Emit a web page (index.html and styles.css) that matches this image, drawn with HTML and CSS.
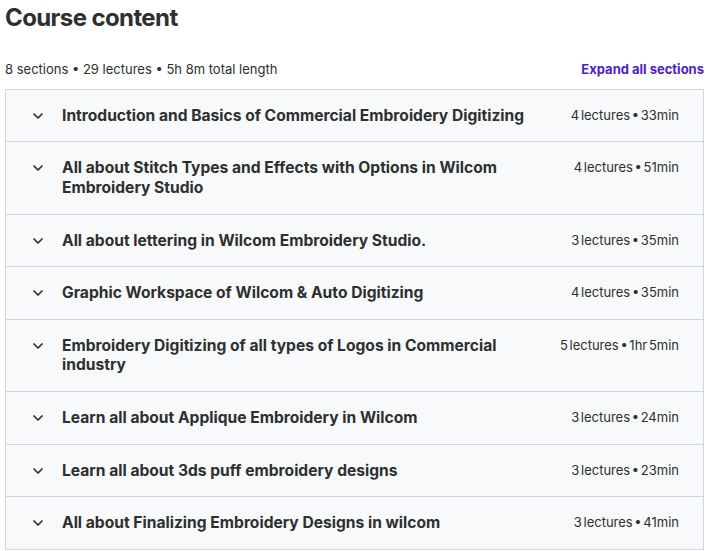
FILE: index.html
```html
<!DOCTYPE html>
<html>
	<head>
		<meta charset="UTF-8">
		<title>Course content</title>
		<link rel="stylesheet" href="styles.css">
	</head>
	<body>
		<div id="wrap">
			<h2 class="title">Course content</h2>
			<div class="meta">
				<span class="meta-text">8 sections • 29 lectures • 5h 8m total length</span>
				<button class="expand">Expand all sections</button>
			</div>
			<div class="sections">
				<div class="section">
					<svg class="chevron" viewBox="0 0 24 24"><path d="M6 9l6 6 6-6"/></svg>
					<span class="section-title">Introduction and Basics of Commercial Embroidery Digitizing</span>
					<span class="section-info">4 lectures • 33min</span>
				</div>
				<div class="section">
					<svg class="chevron" viewBox="0 0 24 24"><path d="M6 9l6 6 6-6"/></svg>
					<span class="section-title">All about Stitch Types and Effects with Options in Wilcom Embroidery Studio</span>
					<span class="section-info">4 lectures • 51min</span>
				</div>
				<div class="section">
					<svg class="chevron" viewBox="0 0 24 24"><path d="M6 9l6 6 6-6"/></svg>
					<span class="section-title">All about lettering in Wilcom Embroidery Studio.</span>
					<span class="section-info">3 lectures • 35min</span>
				</div>
				<div class="section">
					<svg class="chevron" viewBox="0 0 24 24"><path d="M6 9l6 6 6-6"/></svg>
					<span class="section-title">Graphic Workspace of Wilcom &amp; Auto Digitizing</span>
					<span class="section-info">4 lectures • 35min</span>
				</div>
				<div class="section">
					<svg class="chevron" viewBox="0 0 24 24"><path d="M6 9l6 6 6-6"/></svg>
					<span class="section-title">Embroidery Digitizing of all types of Logos in Commercial industry</span>
					<span class="section-info">5 lectures • 1hr 5min</span>
				</div>
				<div class="section">
					<svg class="chevron" viewBox="0 0 24 24"><path d="M6 9l6 6 6-6"/></svg>
					<span class="section-title">Learn all about Applique Embroidery in Wilcom</span>
					<span class="section-info">3 lectures • 24min</span>
				</div>
				<div class="section">
					<svg class="chevron" viewBox="0 0 24 24"><path d="M6 9l6 6 6-6"/></svg>
					<span class="section-title">Learn all about 3ds puff embroidery designs</span>
					<span class="section-info">3 lectures • 23min</span>
				</div>
				<div class="section">
					<svg class="chevron" viewBox="0 0 24 24"><path d="M6 9l6 6 6-6"/></svg>
					<span class="section-title">All about Finalizing Embroidery Designs in wilcom</span>
					<span class="section-info">3 lectures • 41min</span>
				</div>
			</div>
		</div>
	</body>
</html>
```

FILE: styles.css
```css
body {
	margin: 0;
	background: #fff;
	color: #2d2f31;
	font-family: Inter, "Noto Sans", sans-serif;
}

#wrap {
	padding: 4px 1px 0 5px;
}

.title {
	margin: 0 0 26px;
	font-size: 24px;
	line-height: 1.2;
	font-weight: 700;
	letter-spacing: -0.6px;
}

.meta {
	display: flex;
	justify-content: space-between;
	align-items: center;
	margin-bottom: 10px;
	font-size: 13px;
	line-height: 20px;
}

.expand {
	border: 0;
	background: none;
	padding: 0;
	font: inherit;
	font-weight: 700;
	color: #5022c3;
	cursor: pointer;
}

.sections {
	border: 1px solid #d1d7dc;
	border-bottom: 0;
}

.section {
	display: flex;
	align-items: flex-start;
	padding: 16px 24px;
	background: #f7f9fa;
	border-bottom: 1px solid #d1d7dc;
}

.chevron {
	flex: none;
	width: 16px;
	height: 16px;
	margin: 2px 16px 0 0;
	fill: none;
	stroke: #2d2f31;
	stroke-width: 2.6;
	stroke-linecap: round;
	stroke-linejoin: round;
}

.section-title {
	flex: 1;
	font-size: 15.6px;
	font-weight: 700;
	line-height: 19.6px;
}

.section-info {
	flex: none;
	margin-left: 32px;
	font-size: 13px;
	line-height: 19.6px;
	word-spacing: -2px;
}
```
